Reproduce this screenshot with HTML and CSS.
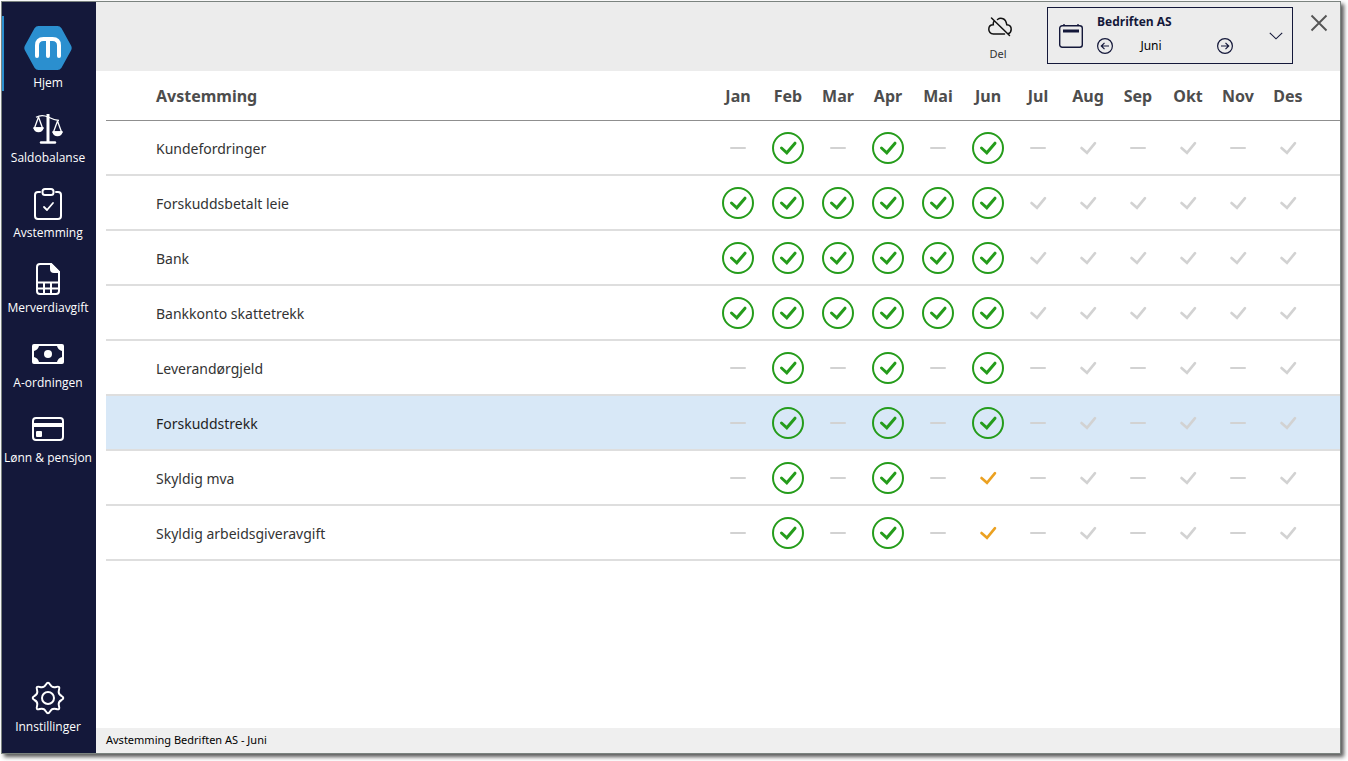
FILE: index.html
```html
<!DOCTYPE html>
<html lang="no">
<head>
<meta charset="utf-8">
<title>Avstemming Bedriften AS - Juni</title>
<link rel="stylesheet" href="styles.css">
</head>
<body>
<svg class="sprite" aria-hidden="true">
  <symbol id="ok" viewBox="0 0 32 32"><circle cx="16" cy="16" r="15" fill="none" stroke="currentColor" stroke-width="2"/><path d="M9.500 16 L14.800 20.800 L23 11.200" fill="none" stroke="currentColor" stroke-width="3" stroke-linecap="round"/></symbol>
  <symbol id="check" viewBox="0 0 32 32"><path d="M9.500 16 L15 20.800 L23 11.200" fill="none" stroke="currentColor" stroke-width="2.600" stroke-linecap="round"/></symbol>
  <symbol id="dash" viewBox="0 0 32 32"><path d="M9 16H23" fill="none" stroke="currentColor" stroke-width="2" stroke-linecap="round"/></symbol>
</svg>
<div class="window">
  <nav class="sidebar">
    <a class="nav-item active" href="#">
      <svg class="logo" viewBox="0 0 48 44"><path d="M14.500 0h19q2.500 0 4 2.200L47 19.500q1.400 2.500 0 5L37.500 41.800q-1.500 2.200-4 2.200h-19q-2.500 0-4-2.200L1 24.500q-1.400-2.500 0-5L10.500 2.200Q12 0 14.500 0z" fill="#2b8fcf"/><path d="M13 30V19.500q0-6.500 6.500-6.500h9q6.500 0 6.500 6.500V30M24 13v17" fill="none" stroke="#fff" stroke-width="4" stroke-linecap="round"/></svg>
      <span>Hjem</span></a>
    <a class="nav-item" href="#">
      <svg class="nav-icon" viewBox="0 0 32 32" fill="none" stroke="#fff" stroke-width="1.300" stroke-linejoin="round"><path d="M16 1v28" stroke-width="3"/><path d="M9 29.500h14" stroke-width="2.400" stroke-linecap="round"/><path d="M4 4.200Q10 1 16 4t11 3.500"/><path d="M6.500 4 2.500 15M6.500 4l4 11M1.500 15h10"/><path d="M25.500 8l-4 11M25.500 8l4 11M20.500 19h10"/><path d="M2 15h9q-1 3.500-4.500 3.500T2 15zM21 19h9q-1 3.500-4.500 3.500T21 19z" fill="#fff"/></svg>
      <span>Saldobalanse</span></a>
    <a class="nav-item" href="#">
      <svg class="nav-icon" viewBox="0 0 32 32" fill="none" stroke="#fff" stroke-width="2" stroke-linecap="round" stroke-linejoin="round"><path d="M8 4H6Q3 4 3 7v21q0 3 3 3h20q3 0 3-3V7q0-3-3-3h-2"/><rect x="10.500" y="1" width="11" height="6" rx="2.500"/><path d="m12 19 3 3 6-7" stroke-width="1.800"/></svg>
      <span>Avstemming</span></a>
    <a class="nav-item" href="#">
      <svg class="nav-icon" viewBox="0 0 32 32" fill="none" stroke="#fff" stroke-width="2" stroke-linejoin="round"><path d="M19 1H8Q5 1 5 4v24q0 3 3 3h16q3 0 3-3V9z"/><path d="M19 1v5q0 3 3 3h5z" fill="#fff"/><path d="M5 19.500h22M5 25.500h22M12 19.500V31M19 19.500V31"/></svg>
      <span>Merverdiavgift</span></a>
    <a class="nav-item" href="#">
      <svg class="nav-icon" viewBox="0 0 32 32"><path d="M2 6h28q2 0 2 2v16q0 2-2 2H2q-2 0-2-2V8q0-2 2-2zM7 8q-1 4-5 5v6q4 1 5 5h18q1-4 5-5v-6q-4-1-5-5z" fill="#fff" fill-rule="evenodd"/><circle cx="16" cy="16" r="4" fill="#fff"/></svg>
      <span>A-ordningen</span></a>
    <a class="nav-item" href="#">
      <svg class="nav-icon" viewBox="0 0 32 32" fill="none" stroke="#fff" stroke-width="2"><rect x="1" y="5" width="30" height="22" rx="3"/><path d="M1 12h30" stroke-width="4"/><rect x="5" y="19" width="4" height="4" fill="#fff" stroke-linejoin="round"/></svg>
      <span>Lønn &amp; pensjon</span></a>
    <a class="nav-item settings" href="#">
      <svg class="nav-icon" viewBox="0 0 32 32" fill="none" stroke="#fff" stroke-width="2" stroke-linejoin="round"><circle cx="16" cy="16" r="6"/><path d="M14 2.400Q16-1 18 2.400Q20 6.300 24.200 5Q28.400 3.600 27 7.800Q25.700 12 29.600 14Q33 16 29.600 18Q25.700 20 27 24.200Q28.400 28.400 24.200 27Q20 25.700 18 29.600Q16 33 14 29.600Q12 25.700 7.800 27Q3.600 28.400 5 24.200Q6.300 20 2.400 18Q-1 16 2.400 14Q6.300 12 5 7.800Q3.600 3.600 7.800 5Q12 6.300 14 2.400z"/></svg>
      <span>Innstillinger</span></a>
  </nav>
  <div class="main">
    <header class="topbar">
      <button class="share" type="button">
        <svg viewBox="0 0 24 24" fill="none" stroke="#111" stroke-width="1.500" stroke-linecap="round"><path d="M9.500 5.500Q12 3.700 15 4.700t3.800 6.100q4.400.4 4.400 4.400 0 3.300-3 4.600M16.500 20H5.500q-4.700-.5-4.700-4.800T5.300 10.800Q5 9 5.800 7.500M3.500 4l18 17.500"/></svg>
        <span>Del</span>
      </button>
      <section class="period" aria-label="Periode">
        <svg class="calendar" viewBox="0 0 24 24" fill="none" stroke="#14183a"><rect x=".7" y="1.700" width="22.600" height="21.600" rx="2.500" stroke-width="1.400"/><path d="M5 0v2M19 0v2" stroke-width="1.400"/><path d="M4 7h16" stroke-width="3"/></svg>
        <div class="period-body">
          <strong>Bedriften AS</strong>
          <div class="stepper">
            <button type="button" aria-label="Forrige måned"><svg viewBox="0 0 16 16" fill="none" stroke="#14183a" stroke-width="1.200"><circle cx="8" cy="8" r="7.400"/><path d="M12 8H4.500M7.500 4.800 4.300 8l3.200 3.200"/></svg></button>
            <span>Juni</span>
            <button type="button" aria-label="Neste måned"><svg viewBox="0 0 16 16" fill="none" stroke="#14183a" stroke-width="1.200"><circle cx="8" cy="8" r="7.400"/><path d="M4 8h7.500M8.500 4.800 11.700 8l-3.200 3.200"/></svg></button>
          </div>
        </div>
        <button class="expand" type="button" aria-label="Velg klient"><svg viewBox="0 0 14 8" fill="none" stroke="#14183a" stroke-width="1.100"><path d="m.8.8 6.200 6 6.200-6"/></svg></button>
      </section>
      <button class="close" type="button" aria-label="Lukk"><svg viewBox="0 0 18 18" fill="none" stroke="#555" stroke-width="1.900"><path d="m1.500 1.500 15 15M16.500 1.500l-15 15"/></svg></button>
    </header>
    <main class="content">
      <table class="grid">
        <thead><tr><th class="name" scope="col">Avstemming</th><th>Jan</th><th>Feb</th><th>Mar</th><th>Apr</th><th>Mai</th><th>Jun</th><th>Jul</th><th>Aug</th><th>Sep</th><th>Okt</th><th>Nov</th><th>Des</th><th class="edge"></th></tr></thead>
        <tbody>
          <tr><td class="name">Kundefordringer</td>
            <td><svg><use href="#dash"/></svg></td><td class="done"><svg><use href="#ok"/></svg></td><td><svg><use href="#dash"/></svg></td><td class="done"><svg><use href="#ok"/></svg></td><td><svg><use href="#dash"/></svg></td><td class="done"><svg><use href="#ok"/></svg></td>
            <td><svg><use href="#dash"/></svg></td><td><svg><use href="#check"/></svg></td><td><svg><use href="#dash"/></svg></td><td><svg><use href="#check"/></svg></td><td><svg><use href="#dash"/></svg></td><td><svg><use href="#check"/></svg></td><td></td></tr>
          <tr><td class="name">Forskuddsbetalt leie</td>
            <td class="done"><svg><use href="#ok"/></svg></td><td class="done"><svg><use href="#ok"/></svg></td><td class="done"><svg><use href="#ok"/></svg></td><td class="done"><svg><use href="#ok"/></svg></td><td class="done"><svg><use href="#ok"/></svg></td><td class="done"><svg><use href="#ok"/></svg></td>
            <td><svg><use href="#check"/></svg></td><td><svg><use href="#check"/></svg></td><td><svg><use href="#check"/></svg></td><td><svg><use href="#check"/></svg></td><td><svg><use href="#check"/></svg></td><td><svg><use href="#check"/></svg></td><td></td></tr>
          <tr><td class="name">Bank</td>
            <td class="done"><svg><use href="#ok"/></svg></td><td class="done"><svg><use href="#ok"/></svg></td><td class="done"><svg><use href="#ok"/></svg></td><td class="done"><svg><use href="#ok"/></svg></td><td class="done"><svg><use href="#ok"/></svg></td><td class="done"><svg><use href="#ok"/></svg></td>
            <td><svg><use href="#check"/></svg></td><td><svg><use href="#check"/></svg></td><td><svg><use href="#check"/></svg></td><td><svg><use href="#check"/></svg></td><td><svg><use href="#check"/></svg></td><td><svg><use href="#check"/></svg></td><td></td></tr>
          <tr><td class="name">Bankkonto skattetrekk</td>
            <td class="done"><svg><use href="#ok"/></svg></td><td class="done"><svg><use href="#ok"/></svg></td><td class="done"><svg><use href="#ok"/></svg></td><td class="done"><svg><use href="#ok"/></svg></td><td class="done"><svg><use href="#ok"/></svg></td><td class="done"><svg><use href="#ok"/></svg></td>
            <td><svg><use href="#check"/></svg></td><td><svg><use href="#check"/></svg></td><td><svg><use href="#check"/></svg></td><td><svg><use href="#check"/></svg></td><td><svg><use href="#check"/></svg></td><td><svg><use href="#check"/></svg></td><td></td></tr>
          <tr><td class="name">Leverandørgjeld</td>
            <td><svg><use href="#dash"/></svg></td><td class="done"><svg><use href="#ok"/></svg></td><td><svg><use href="#dash"/></svg></td><td class="done"><svg><use href="#ok"/></svg></td><td><svg><use href="#dash"/></svg></td><td class="done"><svg><use href="#ok"/></svg></td>
            <td><svg><use href="#dash"/></svg></td><td><svg><use href="#check"/></svg></td><td><svg><use href="#dash"/></svg></td><td><svg><use href="#check"/></svg></td><td><svg><use href="#dash"/></svg></td><td><svg><use href="#check"/></svg></td><td></td></tr>
          <tr class="selected"><td class="name">Forskuddstrekk</td>
            <td><svg><use href="#dash"/></svg></td><td class="done"><svg><use href="#ok"/></svg></td><td><svg><use href="#dash"/></svg></td><td class="done"><svg><use href="#ok"/></svg></td><td><svg><use href="#dash"/></svg></td><td class="done"><svg><use href="#ok"/></svg></td>
            <td><svg><use href="#dash"/></svg></td><td><svg><use href="#check"/></svg></td><td><svg><use href="#dash"/></svg></td><td><svg><use href="#check"/></svg></td><td><svg><use href="#dash"/></svg></td><td><svg><use href="#check"/></svg></td><td></td></tr>
          <tr><td class="name">Skyldig mva</td>
            <td><svg><use href="#dash"/></svg></td><td class="done"><svg><use href="#ok"/></svg></td><td><svg><use href="#dash"/></svg></td><td class="done"><svg><use href="#ok"/></svg></td><td><svg><use href="#dash"/></svg></td><td class="pending"><svg><use href="#check"/></svg></td>
            <td><svg><use href="#dash"/></svg></td><td><svg><use href="#check"/></svg></td><td><svg><use href="#dash"/></svg></td><td><svg><use href="#check"/></svg></td><td><svg><use href="#dash"/></svg></td><td><svg><use href="#check"/></svg></td><td></td></tr>
          <tr><td class="name">Skyldig arbeidsgiveravgift</td>
            <td><svg><use href="#dash"/></svg></td><td class="done"><svg><use href="#ok"/></svg></td><td><svg><use href="#dash"/></svg></td><td class="done"><svg><use href="#ok"/></svg></td><td><svg><use href="#dash"/></svg></td><td class="pending"><svg><use href="#check"/></svg></td>
            <td><svg><use href="#dash"/></svg></td><td><svg><use href="#check"/></svg></td><td><svg><use href="#dash"/></svg></td><td><svg><use href="#check"/></svg></td><td><svg><use href="#dash"/></svg></td><td><svg><use href="#check"/></svg></td><td></td></tr>
        </tbody>
      </table>
    </main>
    <footer class="status">Avstemming Bedriften AS - Juni</footer>
  </div>
</div>
</body>
</html>
```
FILE: styles.css
```css
* { box-sizing: border-box; }
body {
  margin: 0;
  height: 100vh;
  padding: 1px 7px 7px 1px;
  background: #fff;
  font-family: "Noto Sans", "Open Sans", sans-serif;
  font-size: 12px;
  line-height: 16px;
}
button { border: 0; padding: 0; background: none; font: inherit; color: inherit; cursor: pointer; }
svg { display: block; }
.sprite { display: none; }
.window {
  display: flex;
  height: 100%;
  border: 1px solid #7b837f;
  box-shadow: 3px 3px 4px rgba(0, 0, 0, .65);
}
.sidebar {
  display: flex;
  flex-direction: column;
  flex: 0 0 94px;
  padding: 14px 0 18px;
  background: #14183a;
}
.nav-item {
  display: flex;
  flex-direction: column;
  align-items: center;
  justify-content: flex-end;
  gap: 5px;
  height: 75px;
  border-left: 2px solid transparent;
  border-right: 4px solid transparent;
  color: #fff;
  font-family: "Open Sans", "Noto Sans", sans-serif;
  text-decoration: none;
  white-space: nowrap;
}
.nav-item.active { border-left-color: #2b8fcf; }
.nav-icon { width: 32px; height: 32px; overflow: visible; }
.logo { width: 48px; height: 44px; }
.settings { margin-top: auto; }
.main { display: flex; flex: 1; flex-direction: column; min-width: 0; }
.topbar {
  display: flex;
  justify-content: flex-end;
  height: 69px;
  background: #ececec;
}
.share {
  display: flex;
  flex-direction: column;
  align-items: center;
  gap: 8px;
  width: 50px;
  padding-top: 12px;
  margin-right: 24px;
  color: #333;
  font-size: 11px;
}
.share svg { width: 24px; height: 24px; margin-left: 4px; }
.period {
  display: flex;
  width: 246px;
  height: 57px;
  margin-top: 5px;
  padding: 0 9px 0 11px;
  border: 1px solid #14183a;
  align-items: center;
}
.calendar { width: 24px; height: 26px; margin-right: 14px; }
.period-body { display: flex; flex-direction: column; gap: 8px; width: 136px; padding-bottom: 4px; }
.period strong { color: #14183a; font-family: "Open Sans", "Noto Sans", sans-serif; }
.stepper { display: flex; align-items: center; justify-content: space-between; }
.stepper button, .stepper svg { width: 16px; height: 16px; }
.stepper span { margin-right: 28px; }
.expand { margin-left: auto; }
.expand svg { width: 14px; height: 8px; }
.close { align-self: flex-start; margin: 12px 12px 0 17px; }
.close svg { width: 18px; height: 18px; }
.content { flex: 1; padding-left: 10px; background: #fff; }
.grid {
  width: 100%;
  table-layout: fixed;
  border-collapse: separate;
  border-spacing: 0;
  color: #333;
  font-size: 14px;
}
.grid th {
  width: 50px;
  height: 50px;
  padding: 0;
  border-bottom: 1px solid #8f8f8f;
  color: #4d4d4d;
  font-size: 16px;
  text-align: center;
}
.grid td { height: 55px; padding: 0; border-bottom: 2px solid #dedede; color: #d2d2d2; }
.grid .name { width: auto; padding-left: 50px; text-align: left; }
.grid td.name { padding-top: 2px; color: #333; }
.grid th.edge { width: 27px; }
.grid td svg { width: 32px; height: 32px; margin: 0 auto; }
.grid td.done { color: #259c1b; }
.grid td.pending { color: #eba121; }
.grid .selected td { background: #d8e8f7; }
.grid .selected td.name { color: #1f1f1f; }
.status { height: 25px; padding: 0 10px; background: #efefef; font-size: 11px; line-height: 24px; }
```
